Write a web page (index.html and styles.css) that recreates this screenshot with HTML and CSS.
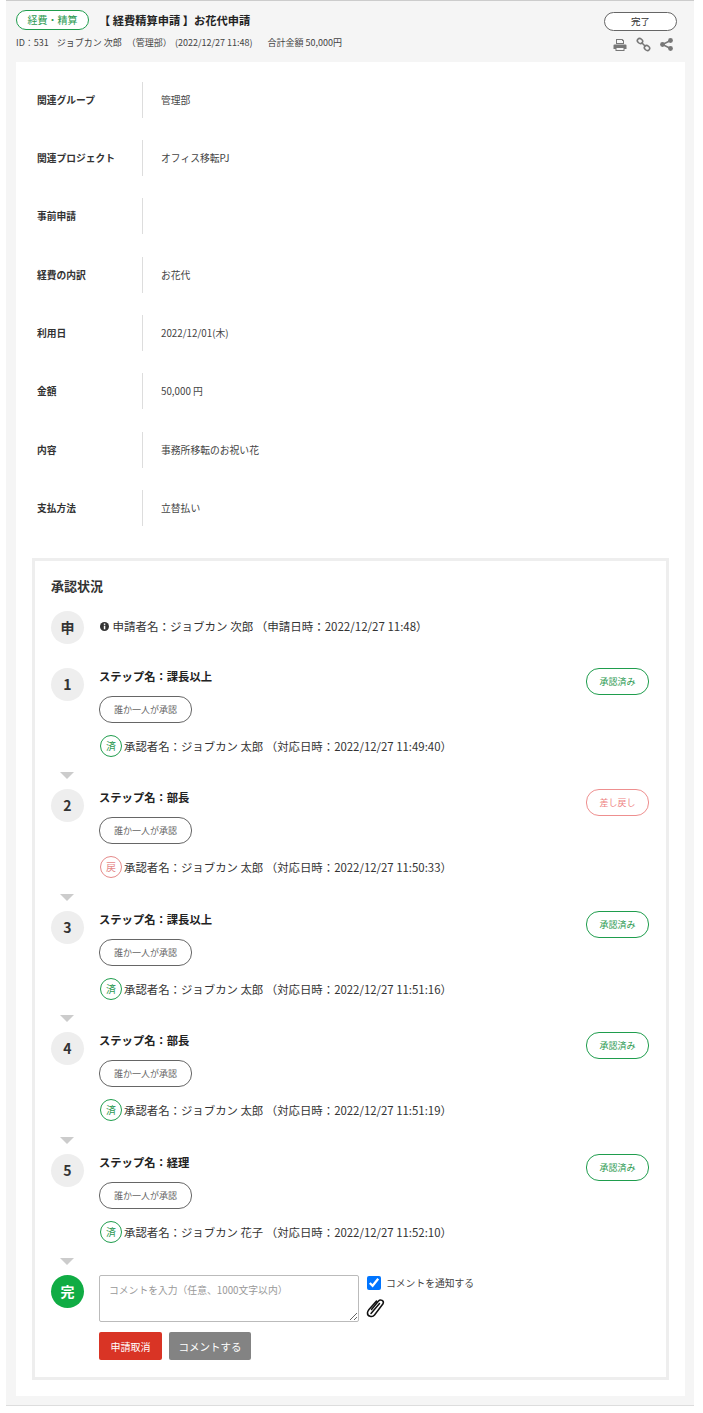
FILE: index.html
```html
<!DOCTYPE html>
<html lang="ja">
<head>
  <meta charset="UTF-8">
  <meta name="viewport" content="width=device-width, initial-scale=1.0">
  <title>経費精算申請</title>
  <link rel="stylesheet" href="styles.css">
</head>
<body>
  <div class="page">
    <!-- ヘッダー -->
    <div class="head">
      <div class="head-left">
        <div class="head-title">
          <span class="tag">経費・精算</span>
          <h1>【 経費精算申請 】お花代申請</h1>
        </div>
        <p class="meta">
          <span class="meta-id">ID：531</span>
          <span class="meta-name">ジョブカン 次郎</span>
          <span class="meta-dept">（管理部）</span>
          <span class="meta-date">(2022/12/27 11:48)</span>
          <span>合計金額 50,000円</span>
        </p>
      </div>
      <div class="head-right">
        <span class="status">完了</span>
        <div class="tools">
          <svg width="14" height="14" viewBox="0 0 14 14"><path fill="#777" fill-rule="evenodd" d="M3 1h6.500L11 2.500V6H3zM4 2v3h6V3H9V2zM1.500 6.500h11q1 0 1 1V11h-2v2h-9v-2h-2V7.500q0-1 1-1zM3.500 10v2h7v-2z"/></svg>
          <svg width="15" height="15" viewBox="0 0 15 15" fill="none" stroke="#777" stroke-width="1.600"><ellipse cx="4" cy="4" rx="2.800" ry="2.300" transform="rotate(40 4 4)"/><ellipse cx="11" cy="11" rx="2.800" ry="2.300" transform="rotate(40 11 11)"/><path d="M5.500 5.500l4 4"/></svg>
          <svg width="13" height="13" viewBox="0 0 13 13"><circle cx="10.500" cy="2.500" r="2.400" fill="#777"/><circle cx="2.500" cy="6.500" r="2.400" fill="#777"/><circle cx="10.500" cy="10.500" r="2.400" fill="#777"/><path fill="none" stroke="#777" stroke-width="1.500" d="M10.500 2.500l-8 4 8 4"/></svg>
        </div>
      </div>
    </div>

    <div class="card">
      <!-- 申請内容 -->
      <dl class="fields">
        <div class="field"><dt>関連グループ</dt><dd>管理部</dd></div>
        <div class="field"><dt>関連プロジェクト</dt><dd>オフィス移転PJ</dd></div>
        <div class="field"><dt>事前申請</dt><dd></dd></div>
        <div class="field"><dt>経費の内訳</dt><dd>お花代</dd></div>
        <div class="field"><dt>利用日</dt><dd>2022/12/01(木)</dd></div>
        <div class="field"><dt>金額</dt><dd>50,000 円</dd></div>
        <div class="field"><dt>内容</dt><dd>事務所移転のお祝い花</dd></div>
        <div class="field"><dt>支払方法</dt><dd>立替払い</dd></div>
      </dl>

      <!-- 承認状況 -->
      <section class="approval">
        <h2>承認状況</h2>

        <div class="applicant">
          <span class="num">申</span>
          <p>
            <svg class="info" width="9" height="9" viewBox="0 0 9 9"><circle cx="4.500" cy="4.500" r="4.500" fill="#333"/><rect x="3.800" y="1.500" width="1.500" height="1.400" fill="#fff"/><rect x="3.800" y="3.700" width="1.500" height="3.600" fill="#fff"/></svg>
            申請者名：ジョブカン 次郎 （申請日時：2022/12/27 11:48）
          </p>
        </div>

        <div class="step">
          <span class="num">1</span>
          <div class="step-body">
            <h3>ステップ名：課長以上</h3>
            <span class="rule">誰か一人が承認</span>
            <p class="approver"><span class="mark ok">済</span>承認者名：ジョブカン 太郎 （対応日時：2022/12/27 11:49:40）</p>
          </div>
          <span class="result ok">承認済み</span>
        </div>
        <div class="arrow"></div>

        <div class="step">
          <span class="num">2</span>
          <div class="step-body">
            <h3>ステップ名：部長</h3>
            <span class="rule">誰か一人が承認</span>
            <p class="approver"><span class="mark back">戻</span>承認者名：ジョブカン 太郎 （対応日時：2022/12/27 11:50:33）</p>
          </div>
          <span class="result back">差し戻し</span>
        </div>
        <div class="arrow"></div>

        <div class="step">
          <span class="num">3</span>
          <div class="step-body">
            <h3>ステップ名：課長以上</h3>
            <span class="rule">誰か一人が承認</span>
            <p class="approver"><span class="mark ok">済</span>承認者名：ジョブカン 太郎 （対応日時：2022/12/27 11:51:16）</p>
          </div>
          <span class="result ok">承認済み</span>
        </div>
        <div class="arrow"></div>

        <div class="step">
          <span class="num">4</span>
          <div class="step-body">
            <h3>ステップ名：部長</h3>
            <span class="rule">誰か一人が承認</span>
            <p class="approver"><span class="mark ok">済</span>承認者名：ジョブカン 太郎 （対応日時：2022/12/27 11:51:19）</p>
          </div>
          <span class="result ok">承認済み</span>
        </div>
        <div class="arrow"></div>

        <div class="step">
          <span class="num">5</span>
          <div class="step-body">
            <h3>ステップ名：経理</h3>
            <span class="rule">誰か一人が承認</span>
            <p class="approver"><span class="mark ok">済</span>承認者名：ジョブカン 花子 （対応日時：2022/12/27 11:52:10）</p>
          </div>
          <span class="result ok">承認済み</span>
        </div>
        <div class="arrow"></div>

        <div class="finish">
          <span class="num done">完</span>
          <div class="finish-body">
            <div class="comment-row">
              <textarea placeholder="コメントを入力（任意、1000文字以内）"></textarea>
              <div class="comment-side">
                <label class="notify"><input type="checkbox" checked>コメントを通知する</label>
                <svg class="clip" width="22" height="22" viewBox="0 0 22 22" fill="none" stroke="#111" stroke-width="1.500" stroke-linecap="round"><path d="M6.500 12.500l7-8.500c2-2.200 6-.2 4.500 2.800L9.500 18c-2 2.600-7.500 1.600-7-2.500.1-1 .8-2 1.500-3L11.500 4"/><path d="M6 16.500L14.500 6.500"/></svg>
              </div>
            </div>
            <div class="buttons">
              <button class="btn btn-cancel">申請取消</button>
              <button class="btn btn-comment">コメントする</button>
            </div>
          </div>
        </div>
      </section>
    </div>
  </div>
</body>
</html>
```

FILE: styles.css
```css
/* 全体 */
* {
  box-sizing: border-box;
}

body {
  margin: 0;
  padding: 0;
  background-color: #fff;
  color: #333;
  font-family: "Noto Sans CJK JP", "Noto Sans", sans-serif;
  font-size: 12px;
}

h1, h2, h3, p, dl, dd {
  margin: 0;
}

.page {
  width: 688px;
  height: 1406px;
  margin-left: 6px;
  padding: 0 9px 9px 10px;
  background-color: #f5f5f5;
  border-top: 1px solid #ccc;
  border-bottom: 1px solid #ddd;
}

/* ヘッダー */
.head {
  display: flex;
  justify-content: space-between;
  height: 61px;
}

.head-title {
  display: flex;
  align-items: center;
  padding-top: 9px;
}

.tag {
  width: 73px;
  height: 20px;
  border: 1px solid #1f9d4d;
  border-radius: 10px;
  background-color: #fff;
  color: #2c9a52;
  font-size: 10px;
  line-height: 18px;
  text-align: center;
}

h1 {
  margin-left: 10px;
  font-size: 11.250px;
  line-height: 20px;
  font-weight: 700;
  color: #222;
}

.meta {
  display: flex;
  margin-top: 6px;
  font-size: 9px;
  line-height: 14px;
  color: #444;
  white-space: nowrap;
}

.meta-id {
  margin-right: 8px;
}

.meta-name {
  margin-right: 5px;
}

.meta-dept {
  margin-right: 3px;
}

.meta-date {
  margin-right: 15px;
}

.head-right {
  width: 73px;
  margin-right: 8px;
  padding-top: 11px;
}

.status {
  display: block;
  height: 19px;
  border: 1px solid #666;
  border-radius: 10px;
  background-color: #fff;
  font-size: 9.500px;
  line-height: 17px;
  text-align: center;
}

.tools {
  display: flex;
  align-items: center;
  gap: 9px;
  margin: 6px 0 0 9px;
}

/* カード */
.card {
  height: 1334px;
  padding: 0 16px;
  background-color: #fff;
}

.fields {
  height: 496px;
  padding-top: 19.500px;
}

.field {
  display: flex;
  align-items: center;
  height: 36px;
  margin-bottom: 22.400px;
  padding-left: 5px;
}

dt {
  width: 106px;
  height: 36px;
  border-right: 1px solid #ddd;
  font-size: 9.750px;
  line-height: 36px;
  font-weight: 700;
  color: #333;
  white-space: nowrap;
}

dd {
  padding-left: 18px;
  font-size: 9.800px;
  color: #444;
}

/* 承認状況 */
.approval {
  height: 822px;
  padding: 18px 17px 0 16px;
  border: 3px solid #eee;
}

h2 {
  font-size: 13px;
  line-height: 14px;
  font-weight: 700;
  color: #333;
}

.num {
  flex: none;
  width: 33px;
  height: 33px;
  border-radius: 50%;
  background-color: #eee;
  font-size: 14px;
  line-height: 33px;
  font-weight: 700;
  text-align: center;
  color: #333;
}

.num.done {
  background-color: #10ac44;
  color: #fff;
}

.applicant {
  display: flex;
  align-items: center;
  margin-top: 18px;
  height: 33px;
}

.applicant p {
  margin-left: 15px;
  margin-top: -3px;
  font-size: 11.500px;
  color: #333;
}

.info {
  margin: 0 1px 0 1px;
}

.step {
  display: flex;
  margin-top: 23.500px;
  height: 89px;
}

.arrow {
  width: 0;
  height: 0;
  margin: 15.500px 0 0 9px;
  border-left: 7px solid transparent;
  border-right: 7px solid transparent;
  border-top: 7px solid #ccc;
}

.arrow + .step,
.arrow + .finish {
  margin-top: 10px;
}

.step-body {
  flex: 1;
  margin-left: 15px;
}

h3 {
  font-size: 11.300px;
  line-height: 16px;
  font-weight: 700;
  color: #222;
}

.rule {
  display: block;
  width: 93px;
  height: 27px;
  margin-top: 12px;
  border: 1px solid #666;
  border-radius: 13px;
  font-size: 9px;
  line-height: 25px;
  text-align: center;
  color: #666;
}

.approver {
  display: flex;
  align-items: center;
  margin-top: 12px;
  font-size: 11.400px;
  line-height: 22px;
  color: #333;
  white-space: nowrap;
}

.mark {
  width: 22px;
  height: 22px;
  margin: 0 2px 0 1px;
  border: 1px solid;
  border-radius: 50%;
  font-size: 10px;
  line-height: 20px;
  text-align: center;
}

.mark.ok {
  border-color: #1f9d4d;
  color: #2c9a52;
}

.mark.back {
  border-color: #e58a8a;
  color: #e58a8a;
}

.result {
  width: 63px;
  height: 27px;
  border: 1px solid;
  border-radius: 13px;
  font-size: 9px;
  line-height: 25px;
  text-align: center;
}

.result.ok {
  border-color: #1f9d4d;
  color: #2c9a52;
}

.result.back {
  border-color: #ee8f8f;
  color: #ee7f7f;
}

/* コメント */
.finish {
  display: flex;
}

.finish-body {
  margin-left: 15px;
}

.comment-row {
  display: flex;
}

textarea {
  display: block;
  width: 260px;
  height: 47px;
  padding: 7px 9px;
  border: 1px solid #bbb;
  border-radius: 2px;
  font-family: inherit;
  font-size: 9.800px;
  color: #333;
}

textarea::placeholder {
  color: #999;
}

.comment-side {
  margin-left: 8px;
}

.notify {
  display: flex;
  align-items: center;
  height: 14px;
  margin-top: 1px;
  font-size: 9.800px;
  color: #444;
}

.notify input {
  width: 14px;
  height: 14px;
  margin: 0 5px 0 0;
}

.clip {
  display: block;
  margin: 7px 0 0 -2px;
}

.buttons {
  display: flex;
  gap: 7px;
  margin-top: 10px;
}

.btn {
  height: 28px;
  border: none;
  border-radius: 2px;
  color: #fff;
  font-family: inherit;
  font-size: 10px;
}

.btn-cancel {
  width: 63px;
  background-color: #d93425;
}

.btn-comment {
  width: 82px;
  background-color: #838383;
  font-size: 10.500px;
}
```
